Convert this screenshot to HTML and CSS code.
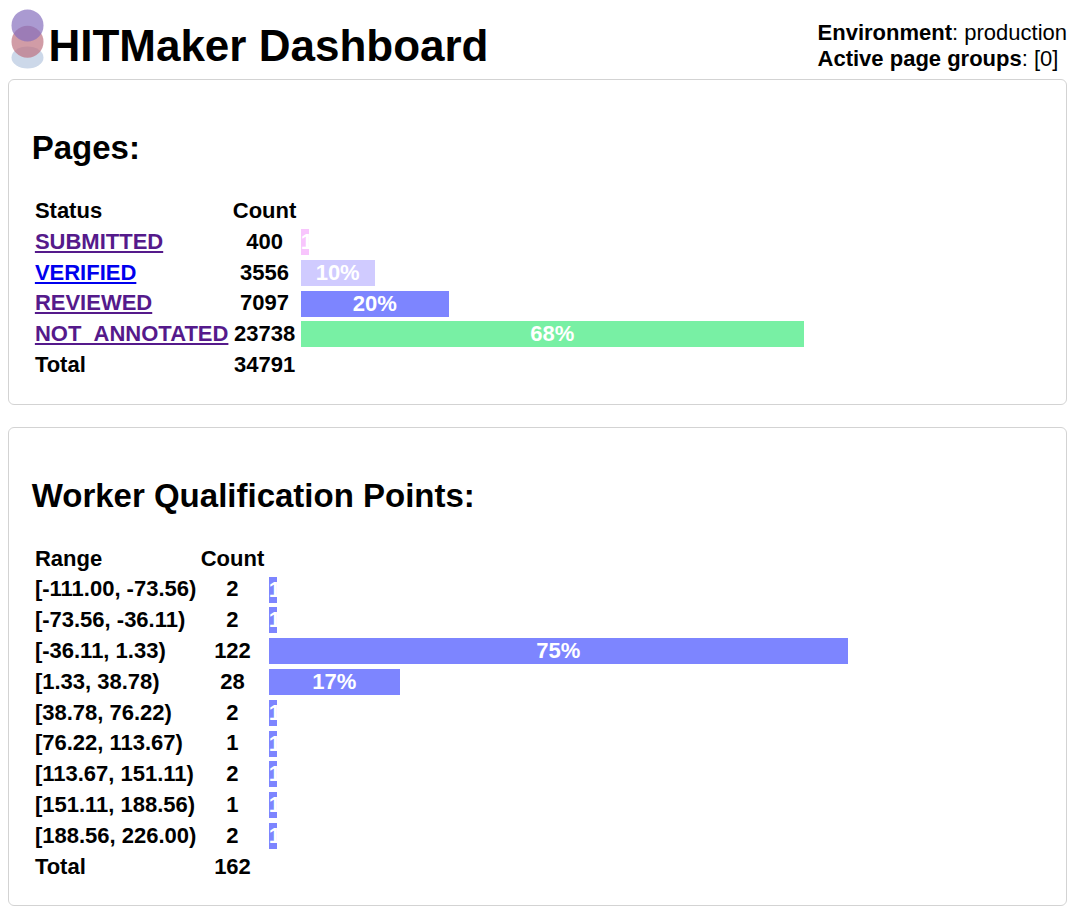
FILE: index.html
```html
<!DOCTYPE html>
<html lang="en">
<head>
<meta charset="utf-8">
<title>HITMaker Dashboard</title>
<link rel="stylesheet" href="styles.css">
</head>
<body>
<header class="header">
  <svg class="logo" viewBox="0 0 40 71" width="40" height="71">
    <ellipse cx="19.5" cy="49.5" rx="16" ry="11" fill="#ccd8e9"/>
    <circle cx="19.5" cy="33.7" r="16" fill="#bd7280" fill-opacity=".7"/>
    <circle cx="19.5" cy="17.4" r="16" fill="#866fbd" fill-opacity=".7"/>
  </svg>
  <h1 class="title">HITMaker Dashboard</h1>
  <div class="info">
    <div><b>Environment</b>: production</div>
    <div><b>Active page groups</b>: [0]</div>
  </div>
</header>
<main class="cards">
  <section class="card">
    <h2>Pages:</h2>
    <table class="stats">
      <tr><th class="label">Status</th><th>Count</th><th class="chart"></th></tr>
      <tr><th class="label"><a class="visited" href="#submitted">SUBMITTED</a></th><th>400</th><th class="chart"><div class="bar pink" style="width:1%">1%</div></th></tr>
      <tr><th class="label"><a href="#verified">VERIFIED</a></th><th>3556</th><th class="chart"><div class="bar lavender" style="width:10%">10%</div></th></tr>
      <tr><th class="label"><a class="visited" href="#reviewed">REVIEWED</a></th><th>7097</th><th class="chart"><div class="bar" style="width:20%">20%</div></th></tr>
      <tr><th class="label"><a class="visited" href="#not-annotated">NOT_ANNOTATED</a></th><th>23738</th><th class="chart"><div class="bar green" style="width:68%">68%</div></th></tr>
      <tr><th class="label">Total</th><th>34791</th><th class="chart"></th></tr>
    </table>
  </section>
  <section class="card">
    <h2>Worker Qualification Points:</h2>
    <table class="stats">
      <tr><th class="label">Range</th><th>Count</th><th class="chart"></th></tr>
      <tr><th class="label">[-111.00, -73.56)</th><th>2</th><th class="chart"><div class="bar" style="width:1%">1%</div></th></tr>
      <tr><th class="label">[-73.56, -36.11)</th><th>2</th><th class="chart"><div class="bar" style="width:1%">1%</div></th></tr>
      <tr><th class="label">[-36.11, 1.33)</th><th>122</th><th class="chart"><div class="bar" style="width:75%">75%</div></th></tr>
      <tr><th class="label">[1.33, 38.78)</th><th>28</th><th class="chart"><div class="bar" style="width:17%">17%</div></th></tr>
      <tr><th class="label">[38.78, 76.22)</th><th>2</th><th class="chart"><div class="bar" style="width:1%">1%</div></th></tr>
      <tr><th class="label">[76.22, 113.67)</th><th>1</th><th class="chart"><div class="bar" style="width:1%">1%</div></th></tr>
      <tr><th class="label">[113.67, 151.11)</th><th>2</th><th class="chart"><div class="bar" style="width:1%">1%</div></th></tr>
      <tr><th class="label">[151.11, 188.56)</th><th>1</th><th class="chart"><div class="bar" style="width:1%">1%</div></th></tr>
      <tr><th class="label">[188.56, 226.00)</th><th>2</th><th class="chart"><div class="bar" style="width:1%">1%</div></th></tr>
      <tr><th class="label">Total</th><th>162</th><th class="chart"></th></tr>
    </table>
  </section>
</main>
</body>
</html>
```
FILE: styles.css
```css
html { overflow: hidden; }
body {
  margin: 8px 9px 0 8px;
  font: 22px/26.4px "Liberation Sans", Arial, sans-serif;
  color: #000;
  background: #fff;
}
.header { display: flex; height: 71px; }
.logo { flex: none; }
.title { margin: 13px 0 0 .4px; font-size: 44px; line-height: 50px; }
.info { margin: 12px 0 0 auto; white-space: nowrap; }
.cards { display: flex; flex-direction: column; gap: 22px; }
.card {
  border: 1px solid #d3d3d3;
  border-radius: 6px;
  padding: 22px 22px 22.25px 22.7px;
}
h2 { margin: 27.4px 0 27.4px; font-size: 33px; line-height: 38px; }
.stats { width: 100%; border-spacing: 2px; }
th { padding: 1.2px; height: 26.4px; white-space: nowrap; text-align: center; }
.label { text-align: left; }
.chart { width: 100%; }
a { color: #0000ee; }
.visited { color: #551a8b; }
.bar {
  min-width: 8px;
  height: 26px;
  overflow: hidden;
  color: #fff;
  background: #7d85ff;
}
.pink { background: #f8c5fd; }
.lavender { background: #d0cbff; }
.green { background: #78f0a4; }
```
